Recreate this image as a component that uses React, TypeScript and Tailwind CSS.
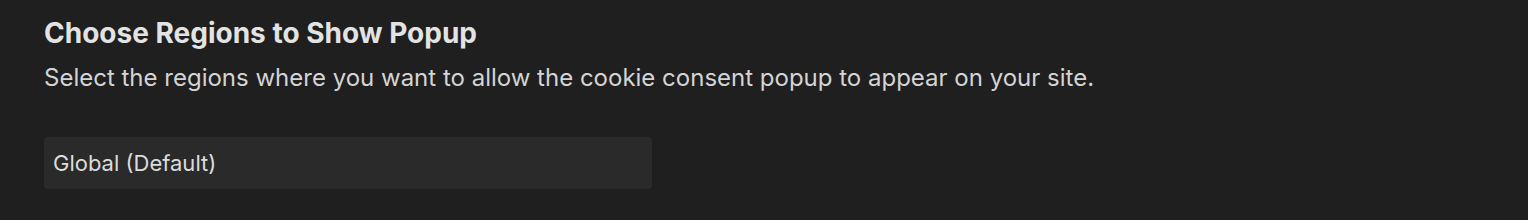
export default function App() {
  return (
    <div
      className="min-h-[220px] w-full bg-[#1f1f1f] px-[44px] pt-[16px] pb-[31px]"
      style={{ fontFamily: 'Inter, "Noto Sans", sans-serif' }}
    >
      <h2 className="text-[28px] leading-[34px] font-bold text-[#e3e3e3]">
        Choose Regions to Show Popup
      </h2>
      <p className="mt-[14px] text-[24px] leading-[28px] text-[#d4d4d4]">
        Select the regions where you want to allow the cookie consent popup to appear on your site.
      </p>
      <div className="mt-[45px] flex h-[52px] w-[608px] items-center rounded-[4px] bg-[#2a2a2a] px-[9px] text-[22px] text-[#dcdcdc]">
        Global (Default)
      </div>
    </div>
  );
}
